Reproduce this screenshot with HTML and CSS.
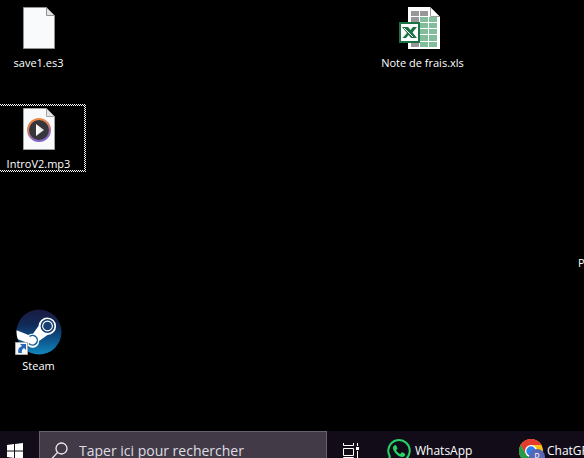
FILE: index.html
```html
<!DOCTYPE html>
<html lang="fr">
<head>
<meta charset="utf-8">
<title>Bureau</title>
<link rel="stylesheet" href="styles.css">
</head>
<body>
<main class="desktop">
  <button class="item c1 r1">
    <svg class="icon" viewBox="0 0 48 48" aria-hidden="true">
      <path d="M8.500 2.500h23l8 8v33h-31z" fill="#f9fafb" stroke="#929292"/>
      <path d="M31.500 2.500v8h8z" fill="#e4e4e4" stroke="#929292"/>
    </svg>
    <span class="label">save1.es3</span>
  </button>
  <button class="item c1 r2 focused">
    <svg class="icon" viewBox="0 0 48 48" aria-hidden="true">
      <defs>
        <linearGradient id="ring" x1="0" y1="0" x2="0.3" y2="1">
          <stop offset="0" stop-color="#f58a35"/><stop offset="0.45" stop-color="#d98265"/><stop offset="1" stop-color="#8064c8"/>
        </linearGradient>
        <linearGradient id="play" x1="0" x2="1"><stop offset="0" stop-color="#fff"/><stop offset="1" stop-color="#ddd"/></linearGradient>
      </defs>
      <path d="M8.500 2.500h23l8 8v33h-31z" fill="#f9fafb" stroke="#a2a2a2"/>
      <path d="M31.500 2.500v8h8z" fill="#e4e4e4" stroke="#a2a2a2"/>
      <circle cx="24" cy="24" r="11" fill="#36373a" stroke="url(#ring)" stroke-width="2"/>
      <path d="M21 18v12l8-6z" fill="url(#play)"/>
    </svg>
    <span class="label">IntroV2.mp3</span>
  </button>
  <button class="item c1 r4">
    <svg class="icon" viewBox="0 0 48 48" aria-hidden="true">
      <defs>
        <linearGradient id="steam" x1="0" y1="0" x2="0" y2="1">
          <stop offset="0" stop-color="#1b1b40"/><stop offset="0.35" stop-color="#102a58"/><stop offset="0.65" stop-color="#0d5289"/><stop offset="1" stop-color="#1188bd"/>
        </linearGradient>
        <clipPath id="disc"><circle cx="24" cy="24" r="22.500"/></clipPath>
      </defs>
      <circle cx="24" cy="24" r="22.500" fill="url(#steam)"/>
      <g clip-path="url(#disc)">
        <path d="M0 21.500L13.500 27q2-1.500 4.500-1.200L23.500 18a8.800 8.800 0 1 1 9 9L24 33a6.300 6.300 0 0 1-12.500 1.500L0 30z" fill="#fff"/>
        <circle cx="32.500" cy="18" r="6.200" fill="#fff" stroke="#143c70" stroke-width="1.500"/>
        <circle cx="32.500" cy="18" r="4.300" fill="#173f70"/>
        <path d="M14.500 28.500a4.800 4.800 0 1 1-.5 7" fill="none" stroke="#1b6095" stroke-width="1.500"/>
      </g>
      <path d="M.5 34.500h12v12H.5z" fill="#f7f7f7" stroke="#aaa"/>
      <path d="M5 36h6v6L9 40Q6 42 7 45H3.500Q2 40 7 38z" fill="#2865b5"/>
    </svg>
    <span class="label">Steam</span>
  </button>
  <button class="item c5 r1">
    <svg class="icon" viewBox="0 0 48 48" aria-hidden="true">
      <path d="M9 2h22l10 10v32H9z" fill="#fff"/>
      <path d="M31.500 2.500v9h9" fill="#fff" stroke="#9b9b9b"/>
      <path d="M12 6h8v5h-8zM21 6h8v5h-8zM12 12h8v5h-8zM12 38h8v4h-8z" fill="#989898"/>
      <path d="M21 12h8v5h-8zM30 12h8v5h-8zM21 18h8v5h-8zM30 18h8v5h-8zM21 24h8v5h-8zM30 24h8v5h-8zM21 30h8v6h-8zM30 30h8v6h-8zM21 37h8v5h-8zM30 37h8v5h-8z" fill="#82bd9c"/>
      <path d="M0 17h21v21H0z" fill="#1c7245"/>
      <path d="M2 19h17v17H2z" fill="#fff"/>
      <path d="M3 22h6l2.500 3 2.500-3h4l-4.500 5.500 4.500 5.500h-6l-2.500-3-2.500 3H3.500l4.500-5z" fill="#1c7245"/>
      <path d="M5 23l9 9" stroke="#fff"/>
    </svg>
    <span class="label">Note de frais.xls</span>
  </button>
  <button class="item edge c7 r3"><span class="label">P</span></button>
</main>
<footer class="taskbar">
  <button class="start" aria-label="Démarrer">
    <svg width="16" height="16" viewBox="0 0 16 16"><path d="M0 2l7-1v6.500H0zM8 .9L16 0v7.500H8zM0 8.500h7V15l-7-1zM8 8.500h8V16l-8-1z" fill="#fff"/></svg>
  </button>
  <label class="search">
    <svg width="18" height="18" viewBox="0 0 18 18" fill="none" stroke="#eee" stroke-width="1.300" aria-hidden="true"><circle cx="10.500" cy="6.500" r="5.500"/><path d="M6.600 10.400L1 16.500"/></svg>
    <input type="text" placeholder="Taper ici pour rechercher" aria-label="Taper ici pour rechercher">
  </label>
  <button class="views" aria-label="Vue des tâches">
    <svg width="17" height="17" viewBox="0 0 17 17" fill="none" stroke="#fff"><path d="M.5 0v2.500h10V0M.5 5.500h10v7H.5zM.5 17v-2.500h10V17M14.500 0v3M14.500 8v9"/><path d="M13 4h3v3h-3z" fill="#fff" stroke="none"/></svg>
  </button>
  <button class="app whatsapp">
    <svg width="24" height="24" viewBox="0 0 24 24" aria-hidden="true">
      <path d="M1.300 22.700l1.500-5.400A10.700 10.700 0 1 1 7 21.300z" fill="#120c19" stroke="#25d366" stroke-width="2"/>
      <path d="M8.300 6c-.7 0-2.300 1-2.300 3 0 3.800 5.500 9 9.300 9 1.700 0 3-1.200 3-2.800 0-.5-2.800-2-3.300-2-.6 0-1.200 1.700-1.800 1.700-1 0-4-2.700-4-3.600 0-.6 1.200-1.200 1.200-1.800 0-.5-1-3.500-2.100-3.500z" fill="#25d366"/>
    </svg>
    <span>WhatsApp</span>
  </button>
  <button class="app chrome">
    <svg width="26" height="24" viewBox="0 0 26 24" aria-hidden="true">
      <circle cx="12" cy="12" r="12" fill="#fbc116"/>
      <path d="M1.600 6A12 12 0 0 1 22.400 6H12l-5.200 9z" fill="#e33b2e"/>
      <path d="M1.600 6l5.200 9A6 6 0 0 0 17.200 15L12 24A12 12 0 0 1 1.600 6z" fill="#269c4b"/>
      <circle cx="12" cy="12" r="6" fill="#fff"/><circle cx="12" cy="12" r="4.700" fill="#2f7de8"/>
      <circle cx="18" cy="18" r="8" fill="#5866b5"/>
      <text x="18" y="21" class="badge">P</text>
    </svg>
    <span>ChatGPT</span>
  </button>
</footer>
</body>
</html>
```
FILE: styles.css
```css
* { box-sizing: border-box; }
body {
  margin: 0;
  height: 100vh;
  display: grid;
  grid-template-rows: minmax(0, 1fr) 27px;
  overflow: hidden;
  background: #000;
  color: #fff;
  font: 12px/16px "Open Sans", "Noto Sans", sans-serif;
}
button {
  margin: 0;
  padding: 0;
  border: 0;
  background: none;
  color: inherit;
  font: inherit;
  white-space: nowrap;
}
.desktop {
  display: grid;
  grid-template-columns: repeat(7, 95px);
  grid-auto-rows: 101px;
  column-gap: 1px;
  align-items: start;
  margin-left: -9px;
  padding-top: 3px;
  overflow: hidden;
  font-size: 11px;
}
.item {
  display: flex;
  flex-direction: column;
  align-items: center;
  gap: 2px;
  height: 68px;
  border: 2px solid transparent;
  border-top-width: 2px;
}
.icon { width: 48px; height: 48px; flex: none; }
.focused {
  background:
    linear-gradient(#000, #000) padding-box,
    repeating-conic-gradient(#fff 0 25%, #000 0 50%) 0 0 / 2px 2px border-box;
}
.edge { align-items: flex-start; justify-content: flex-end; padding-left: 9px; }
.c1 { grid-column: 1; }
.c5 { grid-column: 5; }
.c7 { grid-column: 7; }
.r1 { grid-row: 1; }
.r2 { grid-row: 2; }
.r3 { grid-row: 3; }
.r4 { grid-row: 4; }
.taskbar {
  display: flex;
  align-items: flex-start;
  overflow: hidden;
  background: #120c19;
}
.taskbar > * { height: 40px; flex: none; }
.start { width: 39px; padding-left: 7px; text-align: left; }
.start svg, .views svg { display: block; }
.search {
  display: flex;
  align-items: center;
  gap: 10px;
  width: 288px;
  padding-left: 11px;
  border: 1px solid #69626e;
  background: #423b47;
}
.search input {
  flex: 1;
  min-width: 0;
  padding: 0;
  border: 0;
  outline: 0;
  background: none;
  color: #fff;
  font: 14px/20px "Open Sans", "Noto Sans", sans-serif;
}
.search input::placeholder { color: #dedbe1; opacity: 1; }
.views { width: 48px; padding-left: 16px; }
.app { display: flex; align-items: center; gap: 4px; }
.whatsapp { width: 132px; padding-left: 12px; }
.chrome { padding-left: 12px; gap: 2px; }
.badge { font: 9px "Open Sans", sans-serif; fill: #fff; text-anchor: middle; }
```
